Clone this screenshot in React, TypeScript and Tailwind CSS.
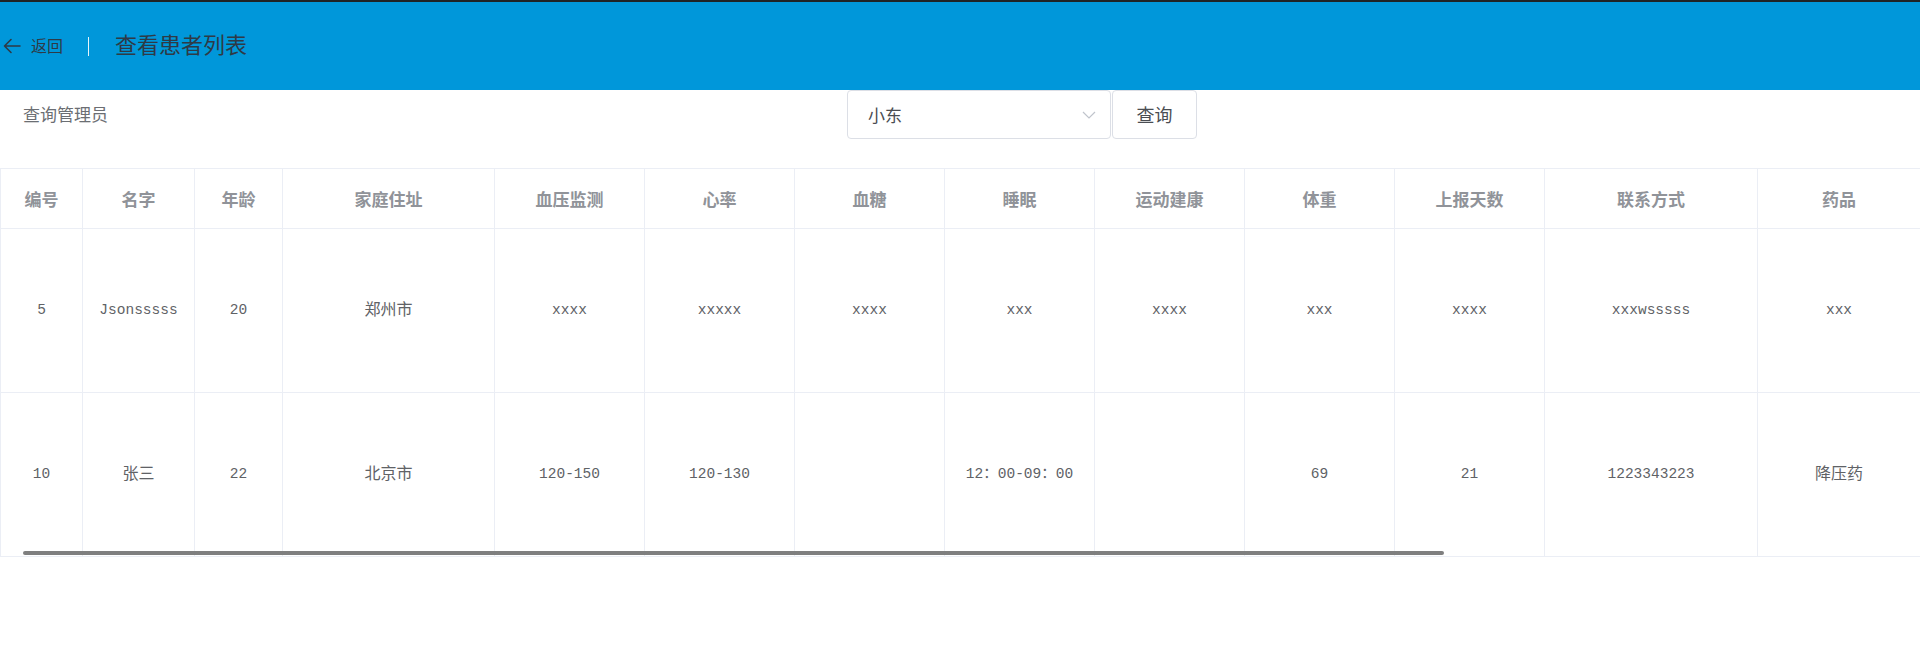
import React from "react";

const cols = [82, 112, 88, 212, 150, 150, 150, 150, 150, 150, 150, 213, 163];
const heads = ["编号", "名字", "年龄", "家庭住址", "血压监测", "心率", "血糖", "睡眠", "运动建康", "体重", "上报天数", "联系方式", "药品"];
const rows = [
  ["5", "Jsonsssss", "20", "郑州市", "xxxx", "xxxxx", "xxxx", "xxx", "xxxx", "xxx", "xxxx", "xxxwsssss", "xxx"],
  ["10", "张三", "22", "北京市", "120-150", "120-130", "", "12：00-09：00", "", "69", "21", "1223343223", "降压药"],
];

const isCjk = (s: string) => /^[\u4e00-\u9fff]+$/.test(s);

export default function App() {
  return (
    <div className="w-[1920px] h-[660px] bg-white overflow-hidden" style={{ fontFamily: '"Noto Sans CJK SC", sans-serif' }}>
      <header className="h-[90px] border-t-2 border-[#1f2326] bg-[#0097da] flex items-center text-[#2e3a46]">
        <svg className="ml-[3px] mb-[1px]" width="18" height="16" viewBox="0 0 18 16" fill="none" stroke="#2e3a46" strokeWidth="1.6" strokeLinecap="round" strokeLinejoin="round">
          <path d="M17 8H1.5M8 1.5L1.5 8L8 14.5" />
        </svg>
        <span className="ml-[10px] mb-[2px] text-[16px] leading-none">返回</span>
        <span className="ml-[25px] w-px h-[19px] bg-white/90" />
        <span className="ml-[26px] mb-[6px] text-[22px] leading-none">查看患者列表</span>
      </header>
      <div className="h-[78px] flex items-start">
        <div className="w-[847px] pl-[23px] pt-[12px] text-[17px] leading-[24px] text-[#6b6e73]">查询管理员</div>
        <div className="w-[264px] h-[49px] border border-[#dcdfe6] rounded-[4px] flex items-center justify-between pl-[20px] pr-[14px] text-[17px] text-[#4a4d52]">
          <span>小东</span>
          <svg width="14" height="8" viewBox="0 0 14 8" fill="none" stroke="#c0c4cc" strokeWidth="1.2">
            <path d="M1 1l6 6 6-6" />
          </svg>
        </div>
        <div className="ml-[1px] w-[85px] h-[49px] border border-[#dcdfe6] rounded-[4px] flex items-center justify-center text-[18px] text-[#4a4d52]">查询</div>
      </div>
      <div className="relative w-[1920px]">
        <table className="w-[1920px] table-fixed border-collapse border border-[#ebeef5]">
          <colgroup>
            {cols.map((w, i) => (
              <col key={i} style={{ width: w }} />
            ))}
          </colgroup>
          <thead>
            <tr className="h-[60px]">
              {heads.map((h) => (
                <th key={h} className="border border-[#ebeef5] text-center text-[17px] font-bold text-[#909399] p-0">
                  {h}
                </th>
              ))}
            </tr>
          </thead>
          <tbody>
            {rows.map((r, ri) => (
              <tr key={ri} className="h-[164px]">
                {r.map((c, ci) => (
                  <td
                    key={ci}
                    className={
                      isCjk(c)
                        ? "border border-[#ebeef5] text-center text-[16px] text-[#606266] p-0"
                        : "border border-[#ebeef5] text-center text-[14.5px] text-[#606266] p-0"
                    }
                    style={{ fontFamily: '"Liberation Mono", "Noto Sans CJK SC", monospace' }}
                  >
                    {c}
                  </td>
                ))}
              </tr>
            ))}
          </tbody>
        </table>
        <div className="absolute left-[23px] top-[383px] w-[1421px] h-[4px] bg-[#7f7f7f] rounded-[2px]" />
      </div>
    </div>
  );
}
